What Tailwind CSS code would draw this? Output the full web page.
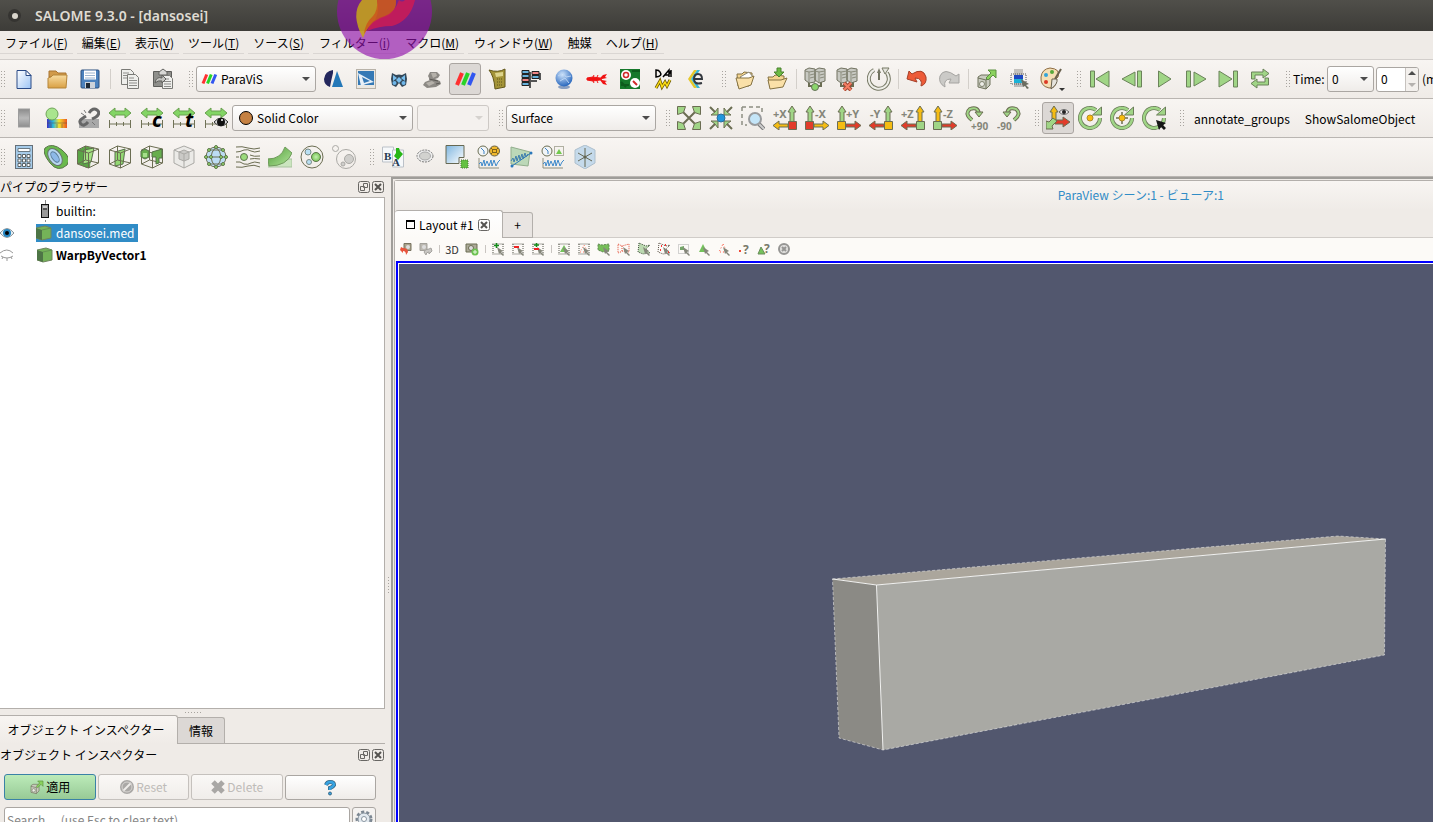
<!DOCTYPE html>
<html lang="ja">
<head>
    <meta charset="UTF-8">
    <meta name="viewport" content="width=device-width, initial-scale=1.0">
    <title>SALOME 9.3.0 - [dansosei]</title>
    <script src="https://cdn.jsdelivr.net/npm/@tailwindcss/browser@4"></script>
</head>
<body class="h-screen flex flex-col overflow-hidden bg-[#efebe7] text-black text-[12px] leading-5 font-['Noto_Sans_CJK_JP',sans-serif]">

<!-- Gradients: must stay rendered, display none disables them -->
<svg class="absolute size-0" xmlns="http://www.w3.org/2000/svg">
    <defs>
        <linearGradient id="gBlue" x1="0" y1="0" x2="1" y2="1"><stop offset="0" stop-color="#fff"/><stop offset="1" stop-color="#9cc4f5"/></linearGradient>
        <linearGradient id="gSky" x1="0" y1="0" x2="1" y2="1"><stop offset="0" stop-color="#7fb6df"/><stop offset="1" stop-color="#fff"/></linearGradient>
        <linearGradient id="gFolder" x1="0" y1="0" x2="0" y2="1"><stop offset="0" stop-color="#f8dca0"/><stop offset="1" stop-color="#d9a044"/></linearGradient>
        <linearGradient id="gGreen" x1="0" y1="0" x2="1" y2="1"><stop offset="0" stop-color="#4f9a38"/><stop offset="1" stop-color="#b4e79c"/></linearGradient>
        <linearGradient id="gGrey" x1="0" y1="0" x2="0" y2="1"><stop offset="0" stop-color="#8b8b8b"/><stop offset=".5" stop-color="#b9b9b9"/><stop offset="1" stop-color="#8d8d8d"/></linearGradient>
        <linearGradient id="gRain" x1="0" y1="0" x2="1" y2="0"><stop offset="0" stop-color="#3b2fc0"/><stop offset=".3" stop-color="#28b8e0"/><stop offset=".6" stop-color="#f4e22c"/><stop offset="1" stop-color="#e9541f"/></linearGradient>
        <radialGradient id="gGlobe" cx=".4" cy=".3" r=".7"><stop offset="0" stop-color="#cfe4fb"/><stop offset="1" stop-color="#2867bd"/></radialGradient>
        <radialGradient id="gBall" cx=".5" cy=".5" r=".5"><stop offset="0" stop-color="#c5f0b0"/><stop offset="1" stop-color="#79c556"/></radialGradient>
    </defs>
</svg>

<!-- Icons -->
<svg class="hidden" xmlns="http://www.w3.org/2000/svg">
    <!-- standard file tools -->
    <symbol id="new" viewBox="0 0 24 24"><path d="M5 3.500h9l5 5v13H5z" fill="url(#gBlue)" stroke="#2a4a86"/><path d="M14 3.500v5h5z" fill="#fff" stroke="#2a4a86"/></symbol>
    <symbol id="open" viewBox="0 0 24 24"><path d="M4 4h7l2 2h8v4H4z" fill="#d19a4a" stroke="#a97431"/><path d="M3 11l3-1 2-2h14l-1 13H3z" fill="url(#gFolder)" stroke="#b58539"/></symbol>
    <symbol id="save" viewBox="0 0 24 24"><rect x="3" y="3" width="18" height="18" rx="1" fill="#4b81bd" stroke="#2b4f7e"/><path d="M6 3.500h12v9H6z" fill="#fff"/><path d="M7 6h10M7 8.500h10M7 11h10" stroke="#9cb4ce"/><path d="M7 15h10v6H7z" fill="#ccd2da"/><path d="M8 16h4v5H8z" fill="#1d2936"/></symbol>
    <symbol id="copy" viewBox="0 0 24 24"><g fill="#efefec" stroke="#7a7a76"><path d="M3.500 2.500h9l3 3v12h-12z"/><path d="M9.500 7.500h8l3 3v11h-11z"/></g><path d="M5 6h6M5 8.500h4M5 11h4M11 11h5M11 13.500h8M11 16h8M11 18.500h8" stroke="#8d8d8a"/></symbol>
    <symbol id="paste" viewBox="0 0 24 24"><path d="M2.500 4.500h18v15h-18z" fill="#8f8f8b" stroke="#5e5e5b"/><path d="M8 5l4-3 4 3v3H8z" fill="#d8d8d5" stroke="#62625f"/><path d="M11.500 8.500h7l3 3v10h-10z" fill="#efefec" stroke="#7a7a76"/><path d="M13 12h5M13 14.500h7M13 17h7M13 19.500h7" stroke="#8d8d8a"/><path d="M4 16q1-7 7-5V8l4 4-4 4v-2q-4-1-7 2z" fill="#c4c4c0" stroke="#60605d"/></symbol>
    <!-- SALOME modules -->
    <symbol id="paravis" viewBox="0 0 24 24"><g stroke-width="4"><path d="M4 18L9 6" stroke="#ff3030"/><path d="M10 18L15 6" stroke="#28d428"/><path d="M16 18L21 6" stroke="#3156f0"/></g></symbol>
    <symbol id="shaper" viewBox="0 0 24 24"><path d="M12 3v3q-2 8-3 14Q3 18 3 12q1-8 9-9z" fill="#24275d"/><path d="M16 4l6 16H11z" fill="#2478b8"/></symbol>
    <symbol id="geom" viewBox="0 0 24 24"><rect x="2.500" y="2.500" width="19" height="19" fill="#ebe8e2" stroke="#b8b2a8"/><path d="M4 4h16v14H4z" fill="#3579b5"/><path d="M4 6l16 9-8 2-5 2z" fill="#e8f0f8"/><path d="M8 10l8 4-6 2z" fill="#3579b5"/></symbol>
    <symbol id="mesh" viewBox="0 0 24 24"><path d="M5 6l4 2q3-1 6 0l4-2 1 6-1 6-4 2-3-4-3 4-4-2-1-6z" fill="#34495a"/><path d="M6 8l4 3-4 3zM18 8l-4 3 4 3zM12 10l3 3-3 3-3-3z" fill="#79bfee"/><circle cx="7.500" cy="16" r="2" fill="#6fb7ea"/><circle cx="16.500" cy="16" r="2" fill="#6fb7ea"/></symbol>
    <symbol id="fields" viewBox="0 0 24 24"><path d="M10 5h7l3 3-2 3-3 1 5 2 1 3-5 3-9 1-4-3 2-3 5-2-2-4z" fill="#8c8984"/><path d="M11 6h5l1 3-4 2zM6 16l6-2 3 2-6 3z" fill="#b5b1aa"/><path d="M9 12l9 2M16 17l4-1" stroke="#5d5a56"/></symbol>
    <symbol id="calc" viewBox="0 0 24 24"><path d="M3 3q9 3 16-1v18l-10 2Q8 9 3 3z" fill="#a49438" stroke="#62571b"/><path d="M9 6l8-1v4l-7 1z" fill="#ddd48c"/><path d="M11 12h6M11 15h6M11 18h6" stroke="#5f551c" stroke-dasharray="1 1"/></symbol>
    <symbol id="yacs" viewBox="0 0 24 24"><path d="M11 5v16M21 6v7M12 14h6" stroke="#555" stroke-width="2"/><g fill="#67b2dc" stroke="#222"><path d="M3 3.500h7v3H3zM3 7.500h7v3H3zM3 15.500h7v3H3zM13 8.500h7v3h-7z"/><path d="M13 4.500h7v3h-7zM3 11.500h7v3H3z" fill="#ef8585"/></g></symbol>
    <symbol id="globe" viewBox="0 0 24 24"><ellipse cx="12" cy="20" rx="6" ry="2" fill="#8aa0c2"/><circle cx="12" cy="11" r="8.500" fill="url(#gGlobe)"/><path d="M6 9l5-3 3 4 5-1M8 14l5-3 4 5" stroke="#b9d3f3" fill="none"/></symbol>
    <symbol id="homard" viewBox="0 0 24 24"><path d="M2 11l6-1 7 1 2 1-2 1-7 1-6-1z" fill="#f01212" stroke="#f01212"/><path d="M15 11l3-3 4-1-2 3 2 1-5 1zM15 13l3 4 4 1-2-3 2-1-5-1z" fill="#f01212"/><path d="M8 10l1-2M12 10l1-2M8 14l1 2M12 14l1 2" stroke="#f01212"/></symbol>
    <symbol id="openturns" viewBox="0 0 24 24"><rect x="2" y="2" width="20" height="20" fill="#16782b"/><path d="M14 4h8M3 18h8M3 15l5 5" stroke="#0d5b1d" stroke-width="2"/><circle cx="8" cy="8" r="5" fill="#fff"/><circle cx="8" cy="8" r="2.500" fill="none" stroke="#d02929" stroke-width="1.500"/><circle cx="17" cy="16" r="5" fill="#fff"/><path d="M15 14l4 4" stroke="#d02929" stroke-width="2"/></symbol>
    <symbol id="adao" viewBox="0 0 24 24"><path d="M5 3v7q7-1 4-5-1-2-4-2zM12 10l6-7v7M14 8h4M20 3v7M20 4l-2 3" fill="none" stroke="#000" stroke-width="1.500"/><path d="M5 21l4-7 2 6 3-5 2 4 3-6" fill="none" stroke="#6b5900" stroke-width="3"/><path d="M5 21l4-7 2 6 3-5 2 4 3-6" fill="none" stroke="#fbdc15" stroke-width="1.500"/></symbol>
    <symbol id="eficas" viewBox="0 0 24 24"><path d="M10 3h3L7 12l6 9h-3l-6-9z" fill="#e6c82a"/><path d="M13 3h3l-6 9 6 9h-3l-6-9z" fill="#3ab8d8"/><path d="M11 12h7q0-5-4-5-4 0-4 5 0 6 8 4" fill="none" stroke="#35393f" stroke-width="2"/></symbol>
    <!-- ParaView main controls -->
    <symbol id="pvopen" viewBox="0 0 24 24"><path d="M4 7h5l2-2 8 1v4l-3 9H5z" fill="#f4d48f" stroke="#857242"/><path d="M7 10l9-5 4 5-5 7z" fill="#fff" stroke="#8b8877"/><path d="M3 11h13l5-2-3 9-12 4z" fill="#fae0a8" stroke="#857242"/></symbol>
    <symbol id="pvload" viewBox="0 0 24 24"><path d="M3 10h5l2-2 9 1v3l-3 8H5z" fill="#f4d48f" stroke="#857242"/><path d="M3 13h13l6-2-4 9-13 2z" fill="#fae0a8" stroke="#857242"/><path d="M12 1h4v4h3l-5 5-5-5h3z" fill="#6cba44" stroke="#4b812f"/></symbol>
    <symbol id="server" viewBox="0 0 24 24"><path d="M6 12v7h12v-7" fill="none" stroke="#6b6d52" stroke-width="2"/><path d="M2 3l4-2 6 1v13l-6 1-4-3zM12 3l4-2 6 1v12l-6 2-4-3z" fill="#c8c9c2" stroke="#70715f"/><path d="M6 5v10M16 5v10M2 4l4 1 6-1M12 4l4 1 6-1M7 8l4-1M17 8l4-1M7 11l4-1M17 11l4-1" fill="none" stroke="#8b8c7d"/></symbol>
    <symbol id="connect" viewBox="0 0 24 24"><use href="#server"/><circle cx="12" cy="20" r="3.500" fill="#8bd56c" stroke="#647157"/></symbol>
    <symbol id="disconnect" viewBox="0 0 24 24"><use href="#server"/><path d="M9 16l7 7M16 16l-7 7" stroke="#a44a34" stroke-width="4"/><path d="M9 16l7 7M16 16l-7 7" stroke="#f47e63" stroke-width="2"/></symbol>
    <symbol id="timer" viewBox="0 0 24 24"><g fill="none"><path d="M7 3A10 10 0 1 0 20 6" stroke="#777965" stroke-width="4"/><path d="M7 3A10 10 0 1 0 20 6" stroke="#eeeee8" stroke-width="2"/></g><path d="M12 13V4" stroke="#70725f" stroke-width="2"/><path d="M12 1l2 5h-4z" fill="#777965"/><path d="M15 1h7l-4 6z" fill="#e4e4dd" stroke="#777965"/></symbol>
    <symbol id="undo" viewBox="0 0 24 24"><path d="M2 12L4 4l3 3Q18 0 21 10q1 7-5 9 2-8-6-8l2 4z" fill="#ed5b38" stroke="#a54029"/></symbol>
    <symbol id="redo" viewBox="0 0 24 24"><path d="M22 16V7l-3 2Q7 0 3 9q-2 7 5 11-2-8 6-8l-2 4z" fill="#cbcac7" stroke="#a5a4a1"/></symbol>
    <symbol id="extract" viewBox="0 0 24 24"><path d="M3 10l3-2h9v10l-4 4-8-2z" fill="#c9cbbf" stroke="#6f735c"/><path d="M3 11l8 2v9M11 13l4-4" fill="none" stroke="#6f735c"/><circle cx="7" cy="17" r="2.500" fill="#eeeee8" stroke="#80836f"/><path d="M13 3h8v8l-3-3-5 5-2-2 5-5z" fill="#8bd25e" stroke="#5c9141"/></symbol>
    <symbol id="query" viewBox="0 0 24 24"><rect x="7" y="2" width="9" height="6" fill="#c4c1bd"/><rect x="7" y="8" width="9" height="5" fill="#1d47c0"/><rect x="7" y="12" width="9" height="4" fill="#1bb2d7"/><rect x="7" y="16" width="9" height="4" fill="#bbb"/><path d="M4 7h15v10H4z" fill="none" stroke="#555" stroke-dasharray="1 1"/><path d="M14 12l8 5-3 1 3 3-2 1-2-3-2 1z" fill="#6b6d60"/></symbol>
    <symbol id="palette" viewBox="0 0 24 24"><path d="M11 1Q22 2 19 10q-4 2-3 6 1 5-6 5Q1 19 2 10q1-8 9-9z" fill="#f5dfb5" stroke="#8e6c43"/><circle cx="7" cy="8" r="2" fill="#33a5d9"/><circle cx="13" cy="5" r="2" fill="#58a83b"/><circle cx="7" cy="15" r="2" fill="#dc3925"/><path d="M22 2l-6 10" stroke="#68604d" stroke-width="2"/><path d="M13 12h5q1 5-6 10z" fill="#e5e3dd" stroke="#68604d"/></symbol>
    <symbol id="first" viewBox="0 0 24 24"><g fill="#a0d586" stroke="#6b835a"><path d="M2.500 4h4v16h-4zM21 4v16L8 12z"/></g></symbol>
    <symbol id="prev" viewBox="0 0 24 24"><g fill="#a0d586" stroke="#6b835a"><path d="M17.500 4h4v16h-4zM15 5v14L2 12z"/></g></symbol>
    <symbol id="play" viewBox="0 0 24 24"><path d="M6.500 4v16L19 12z" fill="#a0d586" stroke="#6b835a"/></symbol>
    <symbol id="next" viewBox="0 0 24 24"><g fill="#a0d586" stroke="#6b835a"><path d="M2.500 4h4v16h-4zM10 5v14l12-7z"/></g></symbol>
    <symbol id="last" viewBox="0 0 24 24"><g fill="#a0d586" stroke="#6b835a"><path d="M17.500 4h4v16h-4zM3 4v16l13-8z"/></g></symbol>
    <symbol id="loop" viewBox="0 0 24 24"><g fill="#a0d586" stroke="#6b835a"><path d="M3.500 12V5H15V2l6 4.500-6 4.500V8H7v4zM20.500 11v7H9v3l-6-4.500L9 12v3h8v-4z"/></g></symbol>
    <!-- colour tools -->
    <symbol id="colorbar" viewBox="0 0 24 24"><rect x="6.500" y="3" width="11" height="18" fill="url(#gGrey)" stroke="#9d9d9d"/></symbol>
    <symbol id="editcolor" viewBox="0 0 24 24"><rect x="3" y="13" width="20" height="9" fill="url(#gRain)"/><path d="M3 17h20M7 18v4M13 18v4M18 18v4" stroke="#5e5040" stroke-opacity=".5"/><circle cx="8" cy="8" r="6" fill="#a9e58e" stroke="#6fa558"/></symbol>
    <symbol id="separate" viewBox="0 0 24 24"><rect x="3" y="13" width="20" height="9" fill="#a8a8a8"/><g fill="none"><path d="M12 16q-4 5-7 2t2-6l3-2M13 7q4-6 8-3t-1 7l-4 2" stroke="#676767" stroke-width="3"/></g><path d="M5 7l3 2M8 4l2 3M16 16l3 3" stroke="#777"/></symbol>
    <symbol id="range" viewBox="0 0 24 24"><path d="M1 7l6-5v3h10V2l6 5-6 5V9H7v3z" fill="#83d565" stroke="#69a04f"/><path d="M1 18h22M1.500 14v8M8.500 16v4M15.500 16v4M22.500 14v8" stroke="#707256"/></symbol>
    <symbol id="rangec" viewBox="0 0 24 24"><use href="#range"/><text x="12" y="21" font-family="Noto Sans" font-size="20" font-weight="bold" font-style="italic">c</text></symbol>
    <symbol id="ranget" viewBox="0 0 24 24"><use href="#range"/><text x="13" y="21" font-family="Noto Sans" font-size="20" font-weight="bold" font-style="italic">t</text></symbol>
    <symbol id="rangev" viewBox="0 0 24 24"><use href="#range"/><path d="M10 16q7-8 14 0-7 8-14 0z" fill="#ddd" stroke="#333"/><circle cx="17" cy="16" r="4" fill="#111"/><circle cx="18" cy="14" r="1" fill="#fff"/></symbol>
    <!-- camera -->
    <symbol id="reset" viewBox="0 0 24 24"><path d="M4 4l16 16M20 4L4 20" stroke="#6b6d52" stroke-width="2"/><path d="M.5.500h8l-2 6-6 2zM23.500.500v8l-6-2-2-6zM.5 23.500v-8l6 2 2 6zM23.500 23.500h-8l2-6 6-2z" fill="#a0d586" stroke="#6b6d52"/></symbol>
    <symbol id="zoomdata" viewBox="0 0 24 24"><path d="M1 1l6 6M23 1l-6 6M1 23l6-6M23 23l-6-6" stroke="#6b6d52" stroke-width="2"/><path d="M9 2v7H2l4-3zM15 2v7h7l-4-3zM9 22v-7H2l4 3zM15 22v-7h7l-4 3z" fill="#a0d586" stroke="#6b6d52"/><circle cx="12" cy="12" r="4" fill="#2196dc" stroke="#2a6e9b"/></symbol>
    <symbol id="zoombox" viewBox="0 0 24 24"><path d="M1 1h20v7M1 1v18h5" fill="none" stroke="#8d8e82" stroke-width="1.500" stroke-dasharray="4 3"/><path d="M18 18l5 5" stroke="#777" stroke-width="4"/><path d="M18 18l5 5" stroke="#ccc" stroke-width="2"/><circle cx="14" cy="13" r="6" fill="#c4e5f8" stroke="#999b9d" stroke-width="2"/></symbol>
    <symbol id="px" viewBox="0 0 24 24"><path d="M17 16V6h-2l4-6 4 6h-2v10z" fill="#a0d586" stroke="#6b6d52"/><path d="M15 18H6v-3l-6 4.500L6 24v-3h9z" fill="#f5bc13" stroke="#6b6d52"/><path d="M15.500 15.500h8v8h-8z" fill="#e13c2a" stroke="#6b6d52"/><text x="0" y="12" font-family="Noto Sans" font-size="11" font-weight="bold" fill="#85867a">+X</text></symbol>
    <symbol id="mx" viewBox="0 0 24 24"><path d="M3 16V6H1l4-6 4 6H7v10z" fill="#a0d586" stroke="#6b6d52"/><path d="M9 18h9v-3l6 4.500-6 4.500v-3H9z" fill="#f5bc13" stroke="#6b6d52"/><path d="M.5 15.500h8v8h-8z" fill="#e13c2a" stroke="#6b6d52"/><text x="10" y="12" font-family="Noto Sans" font-size="11" font-weight="bold" fill="#85867a">-X</text></symbol>
    <symbol id="py" viewBox="0 0 24 24"><path d="M3 16V6H1l4-6 4 6H7v10z" fill="#a0d586" stroke="#6b6d52"/><path d="M9 18h9v-3l6 4.500-6 4.500v-3H9z" fill="#e13c2a" stroke="#6b6d52"/><path d="M.5 15.500h8v8h-8z" fill="#f5bc13" stroke="#6b6d52"/><text x="9" y="12" font-family="Noto Sans" font-size="11" font-weight="bold" fill="#85867a">+Y</text></symbol>
    <symbol id="my" viewBox="0 0 24 24"><path d="M17 16V6h-2l4-6 4 6h-2v10z" fill="#a0d586" stroke="#6b6d52"/><path d="M15 18H6v-3l-6 4.500L6 24v-3h9z" fill="#e13c2a" stroke="#6b6d52"/><path d="M15.500 15.500h8v8h-8z" fill="#f5bc13" stroke="#6b6d52"/><text x="1" y="12" font-family="Noto Sans" font-size="11" font-weight="bold" fill="#85867a">-Y</text></symbol>
    <symbol id="pz" viewBox="0 0 24 24"><path d="M17 16V6h-2l4-6 4 6h-2v10z" fill="#f5bc13" stroke="#6b6d52"/><path d="M15 18H6v-3l-6 4.500L6 24v-3h9z" fill="#e13c2a" stroke="#6b6d52"/><path d="M15.500 15.500h8v8h-8z" fill="#a0d586" stroke="#6b6d52"/><text x="0" y="12" font-family="Noto Sans" font-size="11" font-weight="bold" fill="#85867a">+Z</text></symbol>
    <symbol id="mz" viewBox="0 0 24 24"><path d="M3 16V6H1l4-6 4 6H7v10z" fill="#f5bc13" stroke="#6b6d52"/><path d="M9 18h9v-3l6 4.500-6 4.500v-3H9z" fill="#e13c2a" stroke="#6b6d52"/><path d="M.5 15.500h8v8h-8z" fill="#a0d586" stroke="#6b6d52"/><text x="10" y="12" font-family="Noto Sans" font-size="11" font-weight="bold" fill="#85867a">-Z</text></symbol>
    <symbol id="rotp" viewBox="0 0 24 24"><g fill="none"><path d="M7 14Q-1 8 5 3q8-3 9 5" stroke="#6b6d52" stroke-width="4"/><path d="M7 14Q-1 8 5 3q8-3 9 5" stroke="#a0d586" stroke-width="2"/></g><path d="M10 6h8l-4 5z" fill="#a0d586" stroke="#6b6d52"/><text x="6" y="24" font-family="Noto Sans" font-size="10" font-weight="bold" fill="#85867a">+90</text></symbol>
    <symbol id="rotm" viewBox="0 0 24 24"><g fill="none"><path d="M17 14q8-6 2-11-8-3-9 5" stroke="#6b6d52" stroke-width="4"/><path d="M17 14q8-6 2-11-8-3-9 5" stroke="#a0d586" stroke-width="2"/></g><path d="M6 6h8l-4 5z" fill="#a0d586" stroke="#6b6d52"/><text x="0" y="24" font-family="Noto Sans" font-size="10" font-weight="bold" fill="#85867a">-90</text></symbol>
    <symbol id="axes" viewBox="0 0 24 24"><path d="M6 14V6H4l4-6 4 6h-2v8z" fill="#f5bc13" stroke="#6b6d52"/><path d="M9 14h8v-3l7 5-7 5v-3H9z" fill="#e13c2a" stroke="#6b6d52"/><path d="M7 12l4 3-5 5 1 3H0v-8l3 1z" fill="#a0d586" stroke="#6b6d52"/><path d="M13 6q5-5 10 0-5 5-10 0z" fill="#eee" stroke="#666"/><circle cx="18" cy="6" r="2" fill="#222"/></symbol>
    <symbol id="ring" viewBox="0 0 24 24"><g fill="none"><path d="M18 4A10 10 0 1 0 22 12" stroke="#6b7d5a" stroke-width="4"/><path d="M18 4A10 10 0 1 0 22 12" stroke="#a0d586" stroke-width="2.500"/></g><path d="M23.500 1v8h-9z" fill="#a0d586" stroke="#6b7d5a"/></symbol>
    <symbol id="center" viewBox="0 0 24 24"><use href="#ring"/><circle cx="12" cy="12" r="3" fill="#f9bd0e" stroke="#b08a28"/></symbol>
    <symbol id="resetcenter" viewBox="0 0 24 24"><use href="#ring"/><path d="M12 6v12M6 12h12" stroke="#6b6d52" stroke-width="1.500"/><circle cx="12" cy="12" r="3" fill="#f9bd0e" stroke="#b08a28"/></symbol>
    <symbol id="pickcenter" viewBox="0 0 24 24"><use href="#ring"/><path d="M14 14l10 3-3 2 3 3-2 2-3-3-2 3z" fill="#161616"/></symbol>
    <!-- filters -->
    <symbol id="calculator" viewBox="0 0 24 24"><rect x="3.500" y=".5" width="17" height="23" fill="#a6cbe9" stroke="#667078"/><path d="M6 3.500h12v3H6z" fill="#fff" stroke="#6b7a84"/><g fill="#fff" stroke="#5c6467"><path d="M6 9.500h3v3H6zM10.500 9.500h3v3h-3zM15 9.500h3v3h-3zM6 14h3v3H6zM10.500 14h3v3h-3zM15 14h3v3h-3zM6 18.500h3v3H6zM10.500 18.500h3v3h-3zM15 18.500h3v3h-3z"/></g></symbol>
    <symbol id="contour" viewBox="0 0 24 24"><path d="M1 3Q8-3 18 5t5 15q-9 8-17-2T1 3z" fill="#69b94c" stroke="#5b744b"/><ellipse cx="11" cy="12" rx="6" ry="9.500" transform="rotate(-35 11 12)" fill="#b7d7f0" stroke="#68746a"/><ellipse cx="11" cy="12" rx="3" ry="6" transform="rotate(-35 11 12)" fill="#8db9e8" stroke="#5b7d9a"/></symbol>
    <symbol id="wire" viewBox="0 0 24 24"><path d="M1.500 5l8-4 13 3v14l-10 5-11-4zM1.500 5l11 3 10-4M12.500 8v15M9.500 1v14l13 3M9.500 15l-8 4" fill="none" stroke="#6b6d52"/></symbol>
    <symbol id="clip" viewBox="0 0 24 24"><path d="M2 5l8-4 6 2-2 19-3 1-9-4z" fill="#5aa446"/><path d="M8 5l10-2-3 14-8 2z" fill="#a4e383" stroke="#56714a"/><use href="#wire"/></symbol>
    <symbol id="slice" viewBox="0 0 24 24"><path d="M7 7l10-3-2 15-8 2z" fill="#93d873" stroke="#56714a"/><use href="#wire"/></symbol>
    <symbol id="threshold" viewBox="0 0 24 24"><use href="#wire"/><path d="M1 6l4-2 4 2v6l-4 2-4-2zM12 7l10-3v9h-3v5l-3 1v-7h-4z" fill="#67ae4e" stroke="#56714a"/><path d="M3 8h4v4H3z" fill="#a5df8b"/></symbol>
    <symbol id="subset" viewBox="0 0 24 24"><path d="M2 5l10-4 10 4v13l-10 5-10-5zM2 5l10 4 10-4M12 9v14" fill="#ebeae7" stroke="#aaa9a5"/><path d="M7 7l5-2 5 2v7l-5 2-5-2z" fill="#cac9c6" stroke="#aaa9a5"/><path d="M7 7l5 2 5-2M12 9v7" fill="none" stroke="#aaa9a5"/></symbol>
    <symbol id="glyph" viewBox="0 0 24 24"><circle cx="12" cy="12" r="10" fill="#bcdcf3" stroke="#6b6d52"/><path d="M2 12h20M5 5h14M5 19h14M12 2q-10 10 0 20M12 2q10 10 0 20" fill="none" stroke="#6b6d52"/><g fill="#95d96c" stroke="#5b754a"><circle cx="12" cy="2" r="1.500"/><circle cx="5" cy="5" r="1.500"/><circle cx="19" cy="5" r="1.500"/><circle cx="2" cy="12" r="1.500"/><circle cx="7" cy="12" r="1.500"/><circle cx="17" cy="12" r="1.500"/><circle cx="22" cy="12" r="1.500"/><circle cx="5" cy="19" r="1.500"/><circle cx="19" cy="19" r="1.500"/><circle cx="12" cy="22" r="1.500"/></g></symbol>
    <symbol id="stream" viewBox="0 0 24 24"><path d="M0 2q6-1 12 1t12 0M0 7q4 0 8-2 4-1 7 1t9 0M0 17q4-1 8 2 4 1 7-1t9 0M0 22q6 1 12-1t12 1M14 10q4 2 10 1M14 14q4-1 10 0M0 12h3" fill="none" stroke="#6b6d52"/><circle cx="8" cy="12" r="3.500" fill="#9bdb7c" stroke="#5f7550"/></symbol>
    <symbol id="warp" viewBox="0 0 24 24"><path d="M0 14h24v8H0z" fill="#cbe5bf" stroke="#a9c39f"/><path d="M0 14q13 0 17-12l7 6Q19 21 1 21z" fill="url(#gGreen)" stroke="#6f9b5b"/></symbol>
    <symbol id="group" viewBox="0 0 24 24"><circle cx="12" cy="12" r="11" fill="none" stroke="#6b6d52"/><circle cx="8" cy="7" r="3" fill="#b9dff3" stroke="#7b8c86"/><circle cx="16" cy="12" r="4.500" fill="url(#gBall)" stroke="#5b754a"/><circle cx="9" cy="17" r="2.500" fill="#b9dff3" stroke="#7b8c86"/></symbol>
    <symbol id="level" viewBox="0 0 24 24"><g fill="none" stroke="#aaa9a5"><circle cx="14" cy="14" r="9.500"/><circle cx="3.500" cy="3.500" r="3"/><circle cx="17" cy="14" r="4.500" fill="#cfcecb"/><circle cx="11" cy="19" r="2" fill="#cfcecb"/></g></symbol>
    <symbol id="renamer" viewBox="0 0 24 24"><path d="M1.500 2h11v15h-11z" fill="#f6f8fa" stroke="#bbc1c8"/><path d="M11.500 5h11v17h-11z" fill="#f6f8fa" stroke="#bbc1c8"/><text x="3" y="15" font-family="Liberation Serif" font-size="11" font-weight="bold" fill="#263a52">B</text><text x="11" y="21" font-family="Liberation Serif" font-size="11" font-weight="bold" fill="#263a52">A</text><path d="M15 3h3l1 3 3 3-5 6-4-4 2-3z" fill="#27b616"/></symbol>
    <symbol id="ellipse" viewBox="0 0 24 24"><ellipse cx="12" cy="11" rx="8" ry="6" fill="#eee" stroke="#777" stroke-dasharray="2 1"/><ellipse cx="12" cy="11" rx="5.500" ry="4" fill="#d2d2cf" stroke="#aaa"/></symbol>
    <symbol id="selview" viewBox="0 0 24 24"><path d="M1 .500h18v12h-5v6H1z" fill="url(#gSky)" stroke="#666852"/><rect x="16" y="15" width="7" height="8" fill="#64c142" stroke="#467b32" stroke-dasharray="1 1"/></symbol>
    <symbol id="clock" viewBox="0 0 24 24"><circle cx="6" cy="6" r="5" fill="#f2f5f7" stroke="#6b6d52"/><path d="M4 3l3 3v3" fill="none" stroke="#3f83c5"/><path d="M2 13v10h20" fill="none" stroke="#8d8e7e"/><path d="M2 19l2-2 1 4 2-6 1 6 2-5 2 5 2-6 1 6 2-6 2 6 2-4 2-2" fill="none" stroke="#3f8acb"/></symbol>
    <symbol id="temporal" viewBox="0 0 24 24"><use href="#clock"/><circle cx="17.500" cy="6" r="5" fill="#f1b82d" stroke="#666044"/><path d="M15.500 4.500h4v3h-4zM14 3l2 2M21 3l-2 2M14 9l2-2M21 9l-2-2" fill="none" stroke="#7f631c"/></symbol>
    <symbol id="plotline" viewBox="0 0 24 24"><path d="M2 2l19 5-2 14-17-2z" fill="#bcd8b8" stroke="#92ae8d"/><path d="M3 21L22 8" stroke="#2a78bb"/><circle cx="3" cy="21" r="1.500" fill="#2a78bb"/><circle cx="22" cy="8" r="1.500" fill="#2a78bb"/><path d="M2 16l2-3 1 4 2-6 1 5 2-6 1 5 2-6 1 5 2-6 1 4 2-3" fill="none" stroke="#3f7fae"/></symbol>
    <symbol id="plotsel" viewBox="0 0 24 24"><use href="#clock"/><path d="M13.500 1.500h9v9h-9z" fill="none" stroke="#6b6d52" stroke-dasharray="1 1"/><path d="M18 4l3 5h-6z" fill="#72c94d"/></symbol>
    <symbol id="probe" viewBox="0 0 24 24"><path d="M2 5l10-5 10 5v13l-10 6-10-6z" fill="#c5daeb" stroke="#adbfcc"/><path d="M12 3v19M5 8l14 8M19 8L5 16" stroke="#646651"/><circle cx="12" cy="12" r="1.500" fill="#62644f"/></symbol>
    <!-- small view tools -->
    <symbol id="s-undo" viewBox="0 0 14 14"><path d="M5 1.500h7v7H5z" fill="#aaa28b" stroke="#77725f"/><circle cx="9" cy="5" r="2" fill="#ddd"/><path d="M1 8l1-3 2 1q5 0 5 4l-2 3q0-4-3-4v2z" fill="#e8543c"/></symbol>
    <symbol id="s-redo" viewBox="0 0 14 14"><path d="M1 1.500h7v7H1z" fill="#bbb8b1" stroke="#a3a19b"/><circle cx="5" cy="5" r="2" fill="#ddd"/><path d="M13 9l-1-3-2 1q-4 0-5 3l2 3q0-3 3-3v2z" fill="#c9c7c3" stroke="#a5a39f"/></symbol>
    <symbol id="s-cam" viewBox="0 0 14 14"><path d="M1 2h11v8H1z" fill="#aba997" stroke="#6b6d52"/><circle cx="6" cy="6" r="2.500" fill="#ddd" stroke="#6b6d52"/><circle cx="10" cy="10" r="3.500" fill="#6cc251"/><path d="M8 10h4M10 8v4" stroke="#e7fbe0"/></symbol>
    <symbol id="s-box" viewBox="0 0 14 14"><path d="M1.500 2h11M1.500 12h11M2 2v10M12 2v10" fill="none" stroke="#55564b" stroke-dasharray="1 1"/></symbol>
    <symbol id="s-cur" viewBox="0 0 14 14"><path d="M6 5l6 4-2 1 3 3-1 1-3-3-1 1z" fill="#85867a"/></symbol>
    <symbol id="s-add" viewBox="0 0 14 14"><use href="#s-box"/><use href="#s-cur"/><path d="M5.500 1v5M3 3.500h5" stroke="#138b19" stroke-width="1.500"/></symbol>
    <symbol id="s-sub" viewBox="0 0 14 14"><use href="#s-box"/><use href="#s-cur"/><path d="M3 5h5" stroke="#ed2222" stroke-width="2"/></symbol>
    <symbol id="s-tog" viewBox="0 0 14 14"><use href="#s-box"/><use href="#s-cur"/><path d="M5.500 1v4M3 3h5" stroke="#138b19" stroke-width="1.500"/><path d="M3 7h5" stroke="#e22" stroke-width="2"/></symbol>
    <symbol id="s-cell" viewBox="0 0 14 14"><use href="#s-box"/><path d="M7 3l4 7H3z" fill="#74c35c"/><use href="#s-cur"/></symbol>
    <symbol id="s-pt" viewBox="0 0 14 14"><use href="#s-box"/><path d="M7 3l4 7H3z" fill="none" stroke="#ff745c" stroke-dasharray="1 2"/><use href="#s-cur"/></symbol>
    <symbol id="s-fcell" viewBox="0 0 14 14"><path d="M1 2l4 1 7-1v7l-6 1-5-2z" fill="#76be58" stroke="#628854" stroke-dasharray="2 1"/><use href="#s-cur"/></symbol>
    <symbol id="s-fpt" viewBox="0 0 14 14"><path d="M1 2l4 2 7-2v8l-6-1-5 2zM5 4v5" fill="none" stroke="#e34c35" stroke-dasharray="1 1"/><use href="#s-cur"/></symbol>
    <symbol id="s-pcell" viewBox="0 0 14 14"><path d="M2 1l-1 9 5 2 7-1-4-4 4-4-4 1z" fill="#bbd9b0" stroke="#40503b" stroke-dasharray="1 1"/><use href="#s-cur"/></symbol>
    <symbol id="s-ppt" viewBox="0 0 14 14"><path d="M2 1l-1 9 5 2 7-1-4-4 4-4-4 1z" fill="none" stroke="#584e43" stroke-dasharray="1 1"/><path d="M4 4h1M8 3h1M7 7h1M3 8h1M11 10h1" stroke="#f33" stroke-width="2"/><use href="#s-cur"/></symbol>
    <symbol id="s-block" viewBox="0 0 14 14"><path d="M1.500 2.500h10v9h-10z" fill="none" stroke="#aaa" stroke-dasharray="1 1"/><path d="M3 5l4-1v4H3z" fill="#74a669"/><use href="#s-cur"/></symbol>
    <symbol id="s-icell" viewBox="0 0 14 14"><path d="M6 2l4 8H2z" fill="#74c35c"/><use href="#s-cur"/></symbol>
    <symbol id="s-ipt" viewBox="0 0 14 14"><path d="M6 2l4 8H2z" fill="none" stroke="#ff5038" stroke-dasharray="1 2"/><use href="#s-cur"/></symbol>
    <symbol id="s-hpt" viewBox="0 0 14 14"><path d="M2 9h2" stroke="#f04a38" stroke-width="2"/><text x="6" y="12" font-family="Noto Sans" font-size="12" font-weight="bold" fill="#77786a">?</text></symbol>
    <symbol id="s-hcell" viewBox="0 0 14 14"><path d="M4 5l4 7H1z" fill="#74c35c" stroke="#6b8c5c"/><text x="7" y="11" font-family="Noto Sans" font-size="12" font-weight="bold" fill="#77786a">?</text></symbol>
    <symbol id="s-clear" viewBox="0 0 14 14"><circle cx="7" cy="7" r="5" fill="#e2e1df" stroke="#969593" stroke-width="2"/><path d="M5 5l4 4M9 5L5 9" stroke="#969593" stroke-width="2"/></symbol>
    <!-- dock buttons and tree -->
    <symbol id="float" viewBox="0 0 12 12"><rect x=".5" y=".5" width="11" height="11" rx="2" fill="none" stroke="#686663"/><path d="M5.500 2.500h4v4h-4zM2.500 5.500h4v4h-4z" fill="#efebe7" stroke="#686663"/></symbol>
    <symbol id="close" viewBox="0 0 12 12"><rect x=".5" y=".5" width="11" height="11" rx="2" fill="none" stroke="#686663"/><path d="M3 3l6 6M9 3L3 9" stroke="#555350" stroke-width="2"/></symbol>
    <symbol id="cube" viewBox="0 0 16 16"><path d="M0 3l9-2 6 2v10l-9 2-6-2z" fill="#74b358" stroke="#70845f"/><path d="M0 3l6 2v10l-6-2z" fill="#4e7546"/><path d="M6 5l9-2" stroke="#659252"/></symbol>
    <symbol id="arrow" viewBox="0 0 8 4"><path d="M0 0h8L4 4z" fill="currentColor"/></symbol>
</svg>

<header class="h-[31px] shrink-0 flex items-center gap-[14px] pl-2 bg-linear-to-b from-[#504f4a] to-[#3d3c38] text-[#dfdbd2]">
    <span class="size-[13px] rounded-full bg-[#353431] flex items-center justify-center"><span class="size-[6px] rounded-full bg-[#d8d4cb]"></span></span>
    <h1 class="text-[14px] font-semibold font-['Noto_Sans',sans-serif]">SALOME 9.3.0 - [dansosei]</h1>
</header>

<nav class="h-[29px] shrink-0 flex items-start gap-1 pt-0.5 border-b border-[#d2cecb]">
    <button class="px-[5px] border-b border-[#dad6d3]">ファイル(<u>F</u>)</button>
    <button class="px-[5px] border-b border-[#dad6d3]">編集(<u>E</u>)</button>
    <button class="px-[5px] border-b border-[#dad6d3]">表示(<u>V</u>)</button>
    <button class="px-[5px] border-b border-[#dad6d3]">ツール(<u>T</u>)</button>
    <button class="px-[5px] border-b border-[#dad6d3]">ソース(<u>S</u>)</button>
    <button class="px-[6px] border-b border-[#dad6d3]">フィルター(<u>i</u>)</button>
    <button class="px-[5px] border-b border-[#dad6d3]">マクロ(<u>M</u>)</button>
    <button class="px-[6px] border-b border-[#dad6d3]">ウィンドウ(<u>W</u>)</button>
    <button class="px-[5px] border-b border-[#dad6d3]">触媒</button>
    <button class="px-[5px] border-b border-[#dad6d3]">ヘルプ(<u>H</u>)</button>
</nav>

<!-- Toolbar 1: file, modules, main controls, animation -->
<div class="h-[39px] shrink-0 flex items-center whitespace-nowrap border-b border-[#b9b5b1] bg-linear-to-b from-[#f8f5f2] to-[#efebe7] *:shrink-0">
    <span class="w-[5px] h-[18px] mr-[3px] bg-[radial-gradient(circle,#a8a49f_1px,transparent_1px)] bg-[length:3px_3px]"></span>
    <div class="flex gap-px" data-tools="new open save"></div>
    <span class="w-px h-5 ml-1 mr-[3px] bg-[#d3cfca]"></span>
    <div class="flex gap-px" data-tools="copy paste"></div>
    <span class="w-[5px] h-[18px] ml-[9px] mr-[3px] bg-[radial-gradient(circle,#a8a49f_1px,transparent_1px)] bg-[length:3px_3px]"></span>
    <div class="relative mr-px">
        <select aria-label="Module" class="appearance-none w-[120px] h-[26px] pl-6 border border-[#aaa6a2] rounded-[3px] bg-linear-to-b from-white to-[#efece9]"><option>ParaViS</option></select>
        <svg class="absolute left-1 top-1 size-[18px] pointer-events-none"><use href="#paravis"/></svg>
        <svg class="absolute right-[6px] top-[11px] w-2 h-1 text-[#4c4c4c] pointer-events-none"><use href="#arrow"/></svg>
    </div>
    <div class="flex gap-px" data-tools="shaper geom mesh fields paravis calc yacs globe homard openturns adao eficas" data-active="paravis"></div>
    <span class="w-[5px] h-[18px] ml-[9px] mr-[3px] bg-[radial-gradient(circle,#a8a49f_1px,transparent_1px)] bg-[length:3px_3px]"></span>
    <div class="flex" data-tools="pvopen pvload"></div>
    <span class="w-px h-5 ml-[3px] mr-[2px] bg-[#d3cfca]"></span>
    <div class="flex" data-tools="connect disconnect timer"></div>
    <span class="w-px h-5 ml-[3px] mr-[2px] bg-[#d3cfca]"></span>
    <div class="flex" data-tools="undo redo"></div>
    <span class="w-px h-5 ml-[3px] mr-[2px] bg-[#d3cfca]"></span>
    <div class="flex" data-tools="extract query"></div>
    <button aria-label="Palette" class="relative size-8 flex items-center justify-center"><svg class="size-6"><use href="#palette"/></svg><svg class="absolute right-[2px] bottom-1 w-[6px] h-[3px] text-[#333]"><use href="#arrow"/></svg></button>
    <span class="w-[5px] h-[18px] ml-[9px] mr-[3px] bg-[radial-gradient(circle,#a8a49f_1px,transparent_1px)] bg-[length:3px_3px]"></span>
    <div class="flex" data-tools="first prev play next last loop"></div>
    <span class="w-[5px] h-[18px] ml-[9px] mr-[3px] bg-[radial-gradient(circle,#a8a49f_1px,transparent_1px)] bg-[length:3px_3px]"></span>
    <label for="time" class="w-[34px]">Time:</label>
    <div class="relative mr-[2px]">
        <select id="time" class="appearance-none w-[47px] h-[26px] pl-1 border border-[#aaa6a2] rounded-[3px] bg-linear-to-b from-white to-[#efece9]"><option>0</option></select>
        <svg class="absolute right-[6px] top-[11px] w-2 h-1 text-[#4c4c4c] pointer-events-none"><use href="#arrow"/></svg>
    </div>
    <div class="w-[43px] h-[25px] flex border border-[#aaa6a2] rounded-[3px] bg-white overflow-hidden mr-[3px]">
        <input aria-label="Time step" value="0" class="w-7 pl-1">
        <div class="flex-1 flex flex-col border-l border-[#c6c2be] bg-[#f3f0ed]">
            <button aria-label="Up" class="flex-1 flex items-center justify-center"><svg class="w-2 h-1 rotate-180 text-[#4c4c4c]"><use href="#arrow"/></svg></button>
            <button aria-label="Down" class="flex-1 flex items-center justify-center"><svg class="w-2 h-1 text-[#b5b2af]"><use href="#arrow"/></svg></button>
        </div>
    </div>
    <span>(m</span>
</div>

<!-- Toolbar 2: coloring, representation, camera -->
<div class="h-[39px] shrink-0 flex items-center whitespace-nowrap border-b border-[#b9b5b1] bg-linear-to-b from-[#f8f5f2] to-[#efebe7] *:shrink-0">
    <span class="w-[5px] h-[18px] mr-[3px] bg-[radial-gradient(circle,#a8a49f_1px,transparent_1px)] bg-[length:3px_3px]"></span>
    <div class="flex" data-tools="colorbar editcolor separate range rangec ranget rangev"></div>
    <div class="relative mr-1">
        <select aria-label="Coloring" class="appearance-none w-[181px] h-[26px] pl-6 border border-[#aaa6a2] rounded-[3px] bg-linear-to-b from-white to-[#efece9]"><option>Solid Color</option></select>
        <span class="absolute left-[7px] top-[6px] size-[14px] rounded-full border border-black bg-[#c58142] pointer-events-none"></span>
        <svg class="absolute right-[6px] top-[11px] w-2 h-1 text-[#4c4c4c] pointer-events-none"><use href="#arrow"/></svg>
    </div>
    <div class="relative">
        <select disabled aria-label="Component" class="appearance-none w-[72px] h-[26px] border border-[#cdc9c5] rounded-[3px] bg-[#f4f1ee]"></select>
        <svg class="absolute right-[6px] top-[11px] w-2 h-1 text-[#d5d2ce] pointer-events-none"><use href="#arrow"/></svg>
    </div>
    <span class="w-[5px] h-[18px] ml-[9px] mr-[3px] bg-[radial-gradient(circle,#a8a49f_1px,transparent_1px)] bg-[length:3px_3px]"></span>
    <div class="relative">
        <select aria-label="Representation" class="appearance-none w-[150px] h-[26px] pl-1 border border-[#aaa6a2] rounded-[3px] bg-linear-to-b from-white to-[#efece9]"><option>Surface</option></select>
        <svg class="absolute right-[6px] top-[11px] w-2 h-1 text-[#4c4c4c] pointer-events-none"><use href="#arrow"/></svg>
    </div>
    <span class="w-[5px] h-[18px] ml-[9px] mr-[3px] bg-[radial-gradient(circle,#a8a49f_1px,transparent_1px)] bg-[length:3px_3px]"></span>
    <div class="flex" data-tools="reset zoomdata zoombox px mx py my pz mz rotp rotm"></div>
    <span class="w-[5px] h-[18px] ml-[9px] mr-[3px] bg-[radial-gradient(circle,#a8a49f_1px,transparent_1px)] bg-[length:3px_3px]"></span>
    <div class="flex" data-tools="axes center resetcenter pickcenter" data-active="axes"></div>
    <span class="w-[5px] h-[18px] ml-[9px] mr-[3px] bg-[radial-gradient(circle,#a8a49f_1px,transparent_1px)] bg-[length:3px_3px]"></span>
    <button class="px-[7px] pt-0.5 mr-px">annotate_groups</button>
    <button class="px-[7px] pt-0.5">ShowSalomeObject</button>
</div>

<!-- Toolbar 3: filters -->
<div class="h-[39px] shrink-0 flex items-center border-b border-[#b9b5b1] bg-linear-to-b from-[#f8f5f2] to-[#efebe7] *:shrink-0">
    <span class="w-[5px] h-[18px] mr-[3px] bg-[radial-gradient(circle,#a8a49f_1px,transparent_1px)] bg-[length:3px_3px]"></span>
    <div class="flex" data-tools="calculator contour clip slice threshold subset glyph stream warp group level"></div>
    <span class="w-[5px] h-[18px] ml-[9px] mr-[3px] bg-[radial-gradient(circle,#a8a49f_1px,transparent_1px)] bg-[length:3px_3px]"></span>
    <div class="flex" data-tools="renamer ellipse selview temporal plotline plotsel probe"></div>
</div>

<div class="flex-1 min-h-0 flex">
    <!-- Left docks -->
    <aside class="w-[385px] shrink-0 flex flex-col">
        <div class="h-5 shrink-0 flex items-center justify-between pr-px">
            <h2>パイプのブラウザー</h2>
            <div class="flex gap-[2px]">
                <button aria-label="Float"><svg class="size-3"><use href="#float"/></svg></button>
                <button aria-label="Close"><svg class="size-3"><use href="#close"/></svg></button>
            </div>
        </div>
        <ul class="flex-1 min-h-0 pt-[2px] border-y border-r border-[#b3afab] bg-white">
            <li class="h-[22px] flex items-center">
                <span class="w-[39px]"></span>
                <svg class="w-3 h-[22px] mr-[5px]" viewBox="0 0 12 22"><path d="M6.500 0v4M6.500 20v2" stroke="#8a8a8a"/><rect x="2.500" y="4.500" width="7" height="13" fill="#999" stroke="#111"/><path d="M4 7h4" stroke="#fff"/><path d="M4 9h4" stroke="#111"/></svg>
                <span>builtin:</span>
            </li>
            <li class="h-[22px] flex items-center">
                <svg class="w-[14px] h-3 mr-[22px]" viewBox="0 0 14 12"><path d="M0 6q7-9 14 0-7 9-14 0z" fill="#e4eef4" stroke="#8b9499"/><circle cx="7" cy="6" r="4" fill="#2585c0"/><circle cx="7" cy="6" r="2" fill="#000"/></svg>
                <span class="h-[18px] flex items-center gap-1 pr-[3px] bg-[#308cc6] text-white"><svg class="size-4"><use href="#cube"/></svg>dansosei.med</span>
            </li>
            <li class="h-[22px] flex items-center">
                <svg class="w-[14px] h-3 mr-[23px]" viewBox="0 0 14 12"><path d="M0 4q7-6 13 0M1 7q6 4 12 0M3 8l-1 2M7 9v3M11 8l1 2" fill="none" stroke="#999"/></svg>
                <span class="flex items-center gap-[3px] font-bold"><svg class="size-4"><use href="#cube"/></svg>WarpByVector1</span>
            </li>
        </ul>
        <div class="h-[6px] shrink-0 flex items-center justify-center"><span class="w-[17px] h-[3px] bg-[radial-gradient(circle,#a8a49f_1px,transparent_1px)] bg-[length:3px_3px]"></span></div>
        <div class="h-[29px] shrink-0 flex items-end border-b border-[#b3afab]">
            <button class="w-[178px] h-[29px] -mb-px pr-[5px] border-t border-r border-[#b3afab] rounded-tr-[3px] bg-linear-to-b from-[#f8f5f2] to-[#efebe7]">オブジェクト インスペクター</button>
            <button class="w-[47px] h-[26px] border-t border-r border-[#b3afab] rounded-tr-[3px] bg-[#dcd8d5]">情報</button>
        </div>
        <div class="h-[22px] shrink-0 flex items-center justify-between pr-px">
            <h2>オブジェクト インスペクター</h2>
            <div class="flex gap-[2px]">
                <button aria-label="Float"><svg class="size-3"><use href="#float"/></svg></button>
                <button aria-label="Close"><svg class="size-3"><use href="#close"/></svg></button>
            </div>
        </div>
        <div class="h-[41px] shrink-0 grid grid-cols-4 gap-[2px] pl-1 pr-[9px] pt-2 pb-[7px]">
            <button class="flex items-center justify-center gap-px border border-[#3a82a6] rounded-[3px] bg-linear-to-b from-[#bcebb9] to-[#98ca96]"><svg class="size-4"><use href="#extract"/></svg>適用</button>
            <button disabled class="flex items-center justify-center gap-px border border-[#c5c1bd] rounded-[3px] bg-linear-to-b from-[#faf8f6] to-[#f0edea] text-[#bebbb8]"><svg class="size-4" viewBox="0 0 16 16"><circle cx="8" cy="8" r="7" fill="#aaa8a6"/><path d="M4 12l8-8" stroke="#efedea" stroke-width="2"/><circle cx="8" cy="8" r="5" fill="none" stroke="#d7d4d1"/></svg>Reset</button>
            <button disabled class="flex items-center justify-center gap-px border border-[#c5c1bd] rounded-[3px] bg-linear-to-b from-[#faf8f6] to-[#f0edea] text-[#bebbb8]"><svg class="size-4" viewBox="0 0 16 16"><path d="M3 3l10 10M13 3L3 13" stroke="#a9a7a5" stroke-width="5"/></svg>Delete</button>
            <button aria-label="Help" class="mt-px flex items-center justify-center border border-[#aaa6a2] rounded-[3px] bg-linear-to-b from-white to-[#efece9]"><svg class="size-4" viewBox="0 0 16 16"><path d="M4 5q1-3 4-3 4 0 4 3-1 2-4 3v2" fill="none" stroke="#376784" stroke-width="4"/><path d="M4 5q1-3 4-3 4 0 4 3-1 2-4 3v2" fill="none" stroke="#37a3e2" stroke-width="2.500"/><circle cx="8" cy="13.500" r="1.500" fill="#37a3e2" stroke="#376784"/></svg></button>
        </div>
        <div class="h-[15px] shrink-0 flex gap-[2px] items-start pl-1 pr-[9px] overflow-hidden">
            <input aria-label="Search" placeholder="Search ... (use Esc to clear text)" class="flex-1 h-6 pl-[2px] border border-[#aaa6a2] rounded-[3px] bg-white placeholder:text-[#858585]">
            <button aria-label="Advanced" class="w-6 h-6 flex items-center justify-center border border-[#aaa6a2] rounded-[3px] bg-[#f5f3f1]"><svg class="size-[18px]" viewBox="0 0 18 18"><circle cx="9" cy="9" r="7" fill="none" stroke="#7c8792" stroke-width="3" stroke-dasharray="3 2"/><circle cx="9" cy="9" r="6" fill="#e2e9ef" stroke="#8995a0"/><circle cx="9" cy="9" r="2.500" fill="#fff" stroke="#8995a0"/></svg></button>
        </div>
    </aside>

    <div class="w-[6px] shrink-0 flex items-center justify-center pt-[170px]"><span class="w-[3px] h-[17px] bg-[radial-gradient(circle,#a8a49f_1px,transparent_1px)] bg-[length:3px_3px]"></span></div>

    <!-- Viewer -->
    <main class="flex-1 min-w-0 flex border-l-2 border-t-2 border-[#9f9d99] pl-px pt-px">
        <div class="flex-1 min-w-0 flex flex-col border-l border-t border-[#b3afab] rounded-tl-[3px]">
            <div class="h-[29px] shrink-0 bg-linear-to-b from-[#f8f5f2] to-[#efebe7] pr-[209px] pt-1 text-right text-[#308cc6]">ParaView シーン:1 - ビューア:1</div>
            <div class="h-7 shrink-0 flex items-end">
                <div class="w-[108px] h-7 flex items-center gap-1 pl-[11px] border-t border-r border-[#b3afab] rounded-t-[3px] bg-linear-to-b from-white to-[#fcfaf7]">
                    <span class="w-[9px] h-[9px] border border-t-2 border-black"></span>
                    <button>Layout #1</button>
                    <button aria-label="Close layout"><svg class="size-3"><use href="#close"/></svg></button>
                </div>
                <button aria-label="New layout" class="w-[30px] h-[26px] border-t border-r border-b border-[#b3afab] rounded-tr-[3px] bg-[#e9e5e2]">+</button>
                <span class="flex-1 border-b border-[#d0ccc8]"></span>
            </div>
            <div class="h-[23px] shrink-0 flex items-center pl-px pb-px bg-[#fcfaf7] *:shrink-0">
                <div class="flex" data-small="s-undo s-redo"></div>
                <span class="w-px h-2 ml-[3px] mr-[2px] bg-[#c9c5c1]"></span>
                <button class="w-5 h-5 leading-5 text-[11px] text-[#333]">3D</button>
                <div class="flex" data-small="s-cam"></div>
                <span class="w-px h-2 ml-[3px] mr-[2px] bg-[#c9c5c1]"></span>
                <div class="flex" data-small="s-add s-sub s-tog"></div>
                <span class="w-px h-2 ml-[3px] mr-[2px] bg-[#c9c5c1]"></span>
                <div class="flex" data-small="s-cell s-pt s-fcell s-fpt s-pcell s-ppt s-block s-icell s-ipt s-hpt s-hcell s-clear"></div>
            </div>
            <!-- 3D view -->
            <div class="flex-1 min-h-0 ml-px border-l-2 border-t-2 border-[#0000ff]">
                <div class="h-full border-l border-t border-white bg-[#52576e] overflow-hidden">
                    <svg class="w-[555px] h-[216px] ml-[433px] mt-[271px]" viewBox="832 535 555 216">
                        <path d="M832.500 579L1338 536 1385.500 539 876.500 585z" fill="#aba69c"/>
                        <path d="M832.500 579L876.500 585 883 750 839 738z" fill="#8b8a85"/>
                        <path d="M876.500 585L1385.500 539 1384.500 655 883 750z" fill="#a9a9a4"/>
                        <path d="M832.500 579L876.500 585 1385.500 539M876.500 585L883 750" fill="none" stroke="#f2f2f0"/>
                        <path d="M832.500 579L1338 536 1385.500 539 1384.500 655 883 750 839 738z" fill="none" stroke="#e6e6e6" stroke-dasharray="3 2" stroke-width=".6"/>
                    </svg>
                </div>
            </div>
        </div>
    </main>
</div>

<!-- Recorder badge floating over the window -->
<svg class="absolute left-[337px] top-0 w-[95px] h-[59px] pointer-events-none" viewBox="337 0 95 59">
    <circle cx="384.500" cy="11.500" r="47.500" fill="#9010ac" fill-opacity=".64"/>
    <path d="M362 0q-12 14 1 38 4-12 12-18 5-10 2-20z" fill="#c8a818" fill-opacity=".85"/>
    <path d="M377 0q1 10-4 16-8 7-9 18 8-14 24-18 9-6 8-16z" fill="#cb5a1c" fill-opacity=".9"/>
    <path d="M399 0q-4 12-14 16-14 4-18 15 12-5 25-5 18-5 23-26h-10q-3 3-6 0z" fill="#c81c58" fill-opacity=".9"/>
</svg>

<script>
    // Fill each toolbar group with one button per icon name
    document.querySelectorAll('[data-tools]').forEach(group => {
        group.innerHTML = group.dataset.tools.split(' ').map(name => name === group.dataset.active
            ? `<button aria-label="${name}" aria-pressed="true" class="size-8 flex items-center justify-center border border-[#aaa5a1] rounded-[3px] bg-[#dcd8d5]"><svg class="size-6"><use href="#${name}"/></svg></button>`
            : `<button aria-label="${name}" class="size-8 flex items-center justify-center"><svg class="size-6"><use href="#${name}"/></svg></button>`
        ).join('');
    });

    document.querySelectorAll('[data-small]').forEach(group => {
        group.innerHTML = group.dataset.small.split(' ').map(name =>
            `<button aria-label="${name}" class="size-5 flex items-center justify-center"><svg class="size-[14px]"><use href="#${name}"/></svg></button>`
        ).join('');
    });
</script>
</body>
</html>
